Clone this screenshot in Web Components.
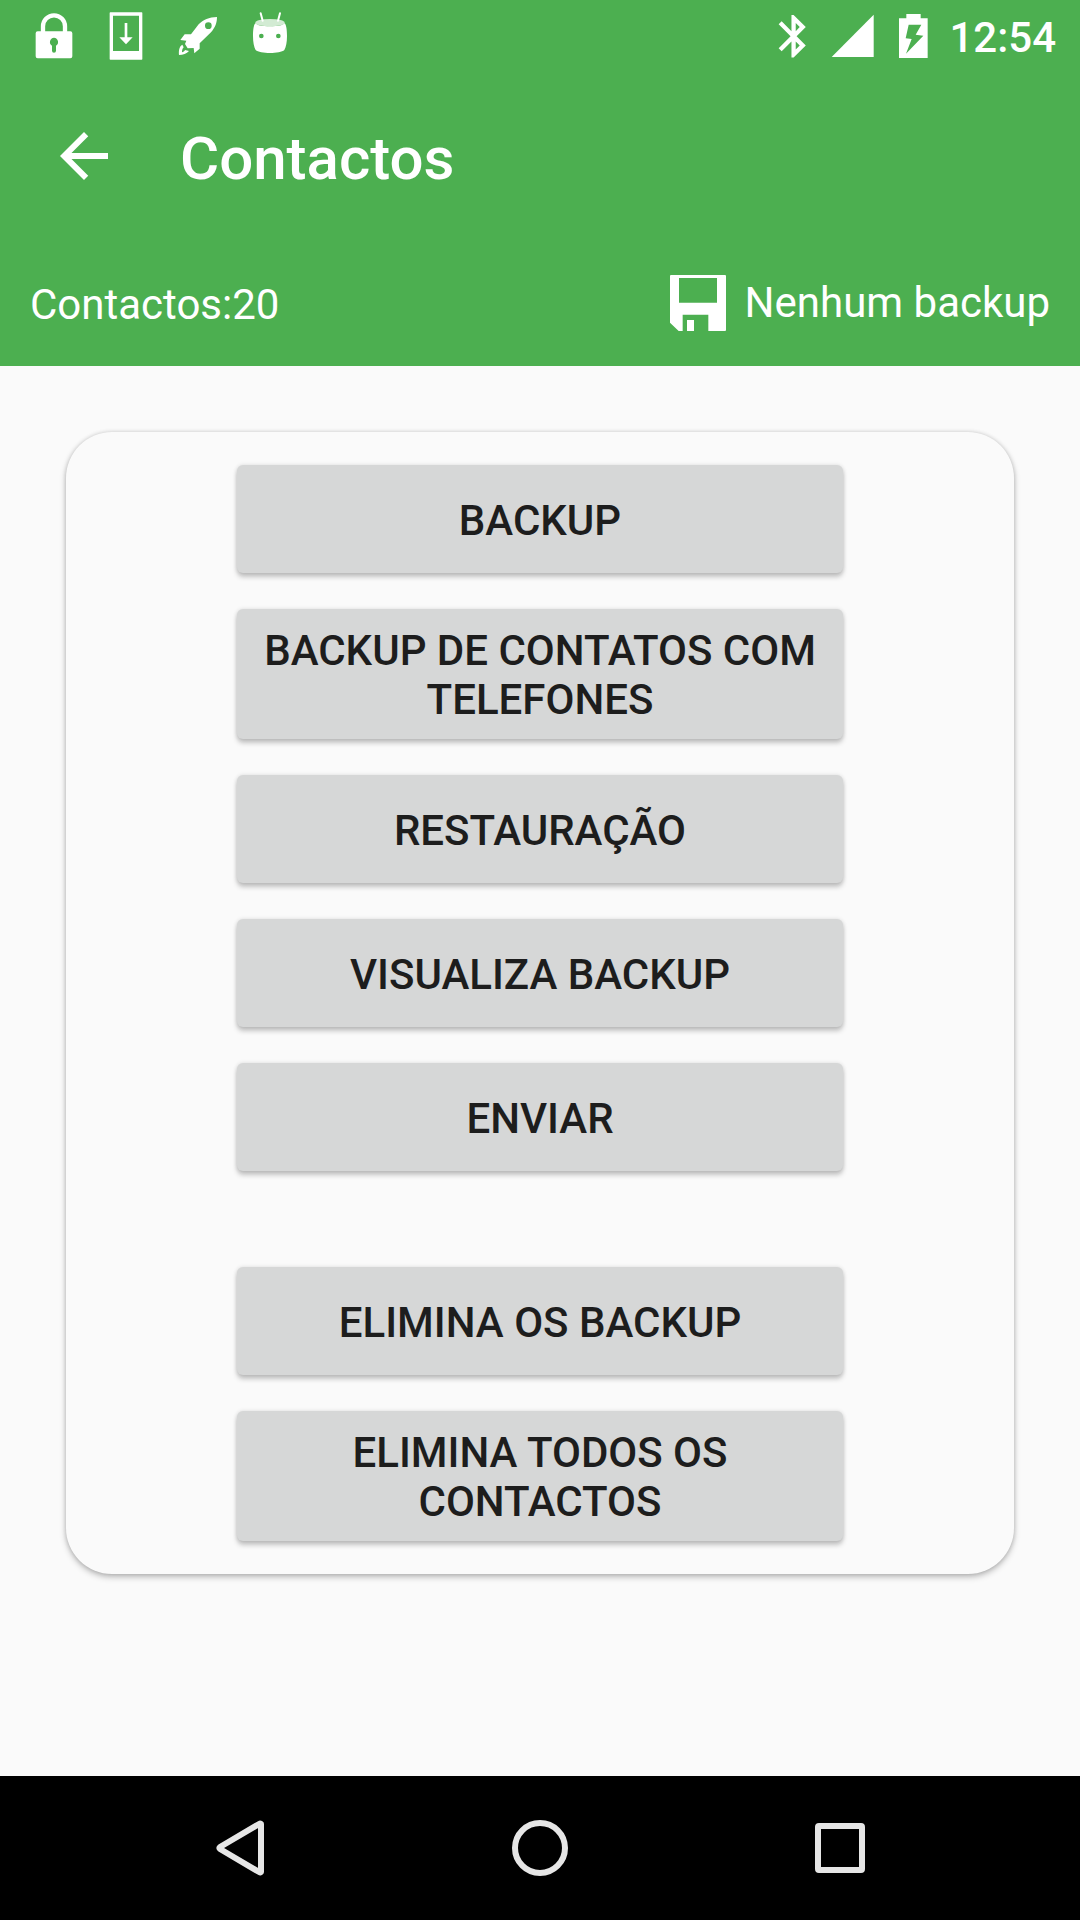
<!DOCTYPE html>
<html lang="pt">
<head>
<meta charset="utf-8">
<meta name="viewport" content="width=device-width, initial-scale=1">
<title>Contactos</title>
<style>
  body {
    margin: 0;
    font-family: Roboto, "Noto Sans", sans-serif;
    background: #fafafa;
  }
</style>
</head>
<body>
<contacts-app></contacts-app>

<script>
const icons = {
  lock: {
    box: '0 0 216 216',
    shape: `<path d="M75 96V79a33 33 0 0 1 66 0v17" fill="none" stroke="currentColor" stroke-width="13"/>
      <path fill-rule="evenodd" d="M59 94h98a6 6 0 0 1 6 6v69a6 6 0 0 1-6 6H59a6 6 0 0 1-6-6v-69a6 6 0 0 1 6-6zM108 113a13 13 0 0 0-6 24v15a6 6 0 0 0 12 0v-15a13 13 0 0 0-6-24z"/>`
  },
  download: {
    box: '0 0 216 216',
    shape: `<path fill-rule="evenodd" d="M61 37h94a2 2 0 0 1 2 2v138a2 2 0 0 1-2 2H61a2 2 0 0 1-2-2V39a2 2 0 0 1 2-2zM69 47v106h78V47z"/>
      <path d="M104 69h8v43h16l-20 21-20-21h16z"/>`
  },
  rocket: {
    box: '0 0 216 216',
    shape: `<path fill-rule="evenodd" d="M165 51C141 51 124 60 110 73L87 103H68L55 120L73 122L69 132L77 145L95 144L97 160L113 146V130L147 97C160 82 165 68 165 51zM139 67a10 10 0 1 0 0 20a10 10 0 1 0 0-20z"/>
      <path fill-rule="evenodd" d="M61 134C52 139 50 150 51 165C63 164 74 162 81 153L69 150C67 154 64 156 60 157C60 151 61 146 65 142z"/>`
  },
  robot: {
    box: '0 0 216 216',
    shape: `<path d="M80 40l6 22M138 40l-6 22" fill="none" stroke="currentColor" stroke-width="6" stroke-linecap="round"/>
      <ellipse cx="108" cy="68" rx="44" ry="11" opacity=".75"/>
      <path fill-rule="evenodd" d="M64 69C66 75 84 79 108 79S150 75 152 69C157 75 159 90 159 108C159 127 156 142 151 150C145 156 126 159 108 159S71 156 65 150C60 142 57 127 57 108C57 90 59 75 64 69zM82 101a7 7 0 1 0 0 14a7 7 0 1 0 0-14zM133 101a7 7 0 1 0 0 14a7 7 0 1 0 0-14z"/>`
  },
  bluetooth: {
    box: '0 0 180 216',
    shape: `<path transform="translate(18 32) scale(6.4)" d="M17.71 7.71L12 2h-1v7.59L6.41 5 5 6.41 10.59 12 5 17.59 6.41 19 11 14.41V22h1l5.71-5.71-4.3-4.29 4.3-4.29zM13 5.83l1.88 1.88L13 9.59V5.83zm1.88 10.46L13 18.17v-3.76l1.88 1.88z"/>`
  },
  signal: {
    box: '0 0 180 216',
    shape: '<path d="M29 171L155 44V171z"/>'
  },
  battery: {
    box: '0 0 180 216',
    shape: '<path fill-rule="evenodd" d="M51 55H73V42H116V55H137V174H51zM80 74L71 115L89 117L72 161L124 107L101 104L118 74z"/>'
  },
  back: {
    box: '0 0 24 24',
    shape: '<path d="M20 11H7.83l5.59-5.59L12 4l-8 8 8 8 1.41-1.41L7.83 13H20v-2z"/>'
  },
  floppy: {
    box: '0 0 168 168',
    shape: `<path fill-rule="evenodd" d="M0 2L2 0H166L168 2V166L166 168H115V119H38V168H26L0 143zM27 9V83H141V9z"/>
      <path d="M51 135H72V168H51z"/>`
  },
  navBack: {
    box: '0 0 72 72',
    shape: '<path d="M16 35L56 11.500L57 12V60L56 60.500L16 37Q15 36 16 35z" fill="none" stroke="currentColor" stroke-width="6" stroke-linejoin="round"/>'
  },
  navHome: {
    box: '0 0 72 72',
    shape: '<circle cx="36" cy="36" r="25" fill="none" stroke="currentColor" stroke-width="6"/>'
  },
  navRecent: {
    box: '0 0 72 72',
    shape: '<rect x="14" y="14" width="44" height="44" rx="1" fill="none" stroke="currentColor" stroke-width="6" stroke-linejoin="round"/>'
  }
}

customElements.define('app-icon',

  class extends HTMLElement {
    constructor() {
      super()
      this.attachShadow({ mode: 'open' })
    }

    connectedCallback() {
      const icon = icons[this.getAttribute('name')]

      this.shadowRoot.innerHTML = `
        <style>
          :host {
            display: block;
            flex: none;
            width: 72px;
            height: 72px;
          }

          svg {
            display: block;
            width: 100%;
            height: 100%;
            fill: currentColor;
          }
        </style>
        <svg viewBox="${icon.box}" aria-hidden="true">${icon.shape}</svg>
      `
    }
  }
)

/**
 * Registers an element whose shadow root is a clone of the given markup.
 */
function defineElement(name, markup) {
  const template = document.createElement('template')
  template.innerHTML = markup

  customElements.define(name,

    class extends HTMLElement {
      constructor() {
        super()
        this.attachShadow({ mode: 'open' }).appendChild(template.content.cloneNode(true))
      }
    }
  )
}

defineElement('status-bar', `
  <style>
    :host {
      display: flex;
      justify-content: space-between;
      height: 72px;
      padding: 0 24px 0 18px;
    }

    div {
      display: flex;
    }

    .system app-icon {
      width: 60px;
    }

    time {
      padding: 4px 0 0 7px;
      font-size: 42px;
      font-weight: 500;
      line-height: 68px;
    }
  </style>

  <div>
    <app-icon name="lock"></app-icon>
    <app-icon name="download"></app-icon>
    <app-icon name="rocket"></app-icon>
    <app-icon name="robot"></app-icon>
  </div>
  <div class="system">
    <app-icon name="bluetooth"></app-icon>
    <app-icon name="signal"></app-icon>
    <app-icon name="battery"></app-icon>
    <time><slot></slot></time>
  </div>
`)

defineElement('app-toolbar', `
  <style>
    :host {
      display: flex;
      align-items: center;
      gap: 60px;
      height: 168px;
      padding: 0 48px;
    }

    button {
      padding: 0;
      border: 0;
      background: none;
      color: inherit;
      cursor: pointer;
    }

    h1 {
      margin: 0;
      padding-top: 6px;
      font-size: 60px;
      font-weight: 500;
      line-height: 72px;
    }
  </style>

  <button type="button" aria-label="Voltar"><app-icon name="back"></app-icon></button>
  <h1><slot></slot></h1>
`)

defineElement('backup-summary', `
  <style>
    :host {
      display: flex;
      align-items: center;
      justify-content: space-between;
      height: 126px;
      padding: 0 30px;
      font-size: 42px;
      line-height: 48px;
    }

    .count {
      padding-top: 4px;
    }

    .state {
      display: flex;
      align-items: center;
      gap: 19px;
    }

    app-icon {
      width: 56px;
      height: 56px;
    }
  </style>

  <span class="count"><slot name="count"></slot></span>
  <span class="state">
    <app-icon name="floppy"></app-icon>
    <slot name="state"></slot>
  </span>
`)

defineElement('action-button', `
  <style>
    :host {
      display: block;
    }

    button {
      display: block;
      width: 100%;
      min-height: 108px;
      padding: 17px 24px 15px;
      border: 0;
      border-radius: 6px;
      background: #d6d7d7;
      box-shadow: 0 4px 5px rgba(0, 0, 0, .22), 0 0 4px rgba(0, 0, 0, .12);
      color: #1d1d1d;
      font: 500 42px/49px Roboto, "Noto Sans", sans-serif;
      text-align: center;
      cursor: pointer;
    }

    button:active {
      background: #c4c5c5;
    }
  </style>

  <button type="button"><slot></slot></button>
`)

defineElement('action-card', `
  <style>
    :host {
      display: block;
      padding: 33px;
      border-radius: 46px;
      background: #fafafa;
      box-shadow: 0 3px 6px rgba(0, 0, 0, .25), 0 0 4px rgba(0, 0, 0, .14);
    }

    div {
      display: flex;
      flex-direction: column;
      gap: 36px;
      max-width: 606px;
      margin: 0 auto;
    }

    .danger {
      margin-top: 96px;
    }
  </style>

  <div><slot></slot></div>
  <div class="danger"><slot name="danger"></slot></div>
`)

defineElement('navigation-bar', `
  <style>
    :host {
      display: flex;
      height: 144px;
      padding: 0 90px;
      background: #000;
      color: #e6e6e6;
    }

    button {
      display: flex;
      flex: 1;
      align-items: center;
      justify-content: center;
      padding: 0;
      border: 0;
      background: none;
      color: inherit;
    }
  </style>

  <button type="button" aria-label="Voltar"><app-icon name="navBack"></app-icon></button>
  <button type="button" aria-label="Início"><app-icon name="navHome"></app-icon></button>
  <button type="button" aria-label="Recentes"><app-icon name="navRecent"></app-icon></button>
`)

defineElement('contacts-app', `
  <style>
    :host {
      display: flex;
      flex-direction: column;
      min-height: 100vh;
    }

    header {
      background: #4caf50;
      color: #fff;
    }

    main {
      flex: 1;
      padding: 66px;
    }
  </style>

  <header>
    <status-bar>12:54</status-bar>
    <app-toolbar>Contactos</app-toolbar>
    <backup-summary>
      <span slot="count">Contactos:20</span>
      <span slot="state">Nenhum backup</span>
    </backup-summary>
  </header>
  <main>
    <action-card>
      <action-button>BACKUP</action-button>
      <action-button>BACKUP DE CONTATOS COM TELEFONES</action-button>
      <action-button>RESTAURAÇÃO</action-button>
      <action-button>VISUALIZA BACKUP</action-button>
      <action-button>ENVIAR</action-button>
      <action-button slot="danger">ELIMINA OS BACKUP</action-button>
      <action-button slot="danger">ELIMINA TODOS OS CONTACTOS</action-button>
    </action-card>
  </main>
  <navigation-bar></navigation-bar>
`)
</script>
</body>
</html>
